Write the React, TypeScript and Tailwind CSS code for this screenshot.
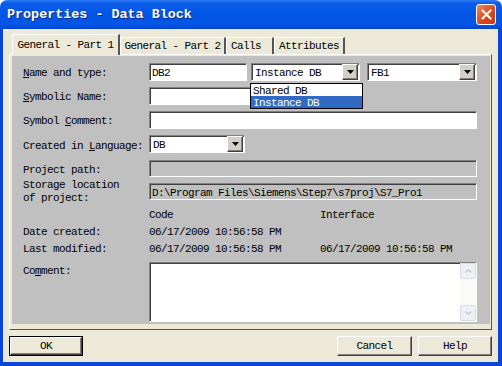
import React from 'react';

const sunken =
  'border border-t-[#808080] border-l-[#808080] border-b-white border-r-white shadow-[inset_1px_1px_0_#404040]';
const raised =
  'border border-t-white border-l-white border-r-[#404040] border-b-[#404040] shadow-[inset_-1px_-1px_0_#808080]';

const DownArrow: React.FC = () => (
  <svg width="7" height="4" viewBox="0 0 7 4">
    <path d="M0 0h7L3.5 4z" fill="#000" />
  </svg>
);

const Combo: React.FC<{ value: string; width: string; children?: React.ReactNode }> = ({
  value,
  width,
  children
}) => (
  <div className={`relative h-full ${width}`}>
    <div className={`h-full flex items-center bg-white ${sunken}`}>
      <span className="flex-1 pl-[3px] pt-[3px]">{value}</span>
      <div className={`w-[16px] h-[16px] mr-[1px] flex items-center justify-center bg-[#d4d0c8] ${raised}`}>
        <DownArrow />
      </div>
    </div>
    {children}
  </div>
);

const Label: React.FC<{ children: React.ReactNode; pt?: string }> = ({ children, pt }) => (
  <div className={`w-[126px] shrink-0 ${pt ?? 'pt-[3px]'}`}>{children}</div>
);

const Tab: React.FC<{ label: string; width: string; active?: boolean; extra?: string }> = ({
  label,
  width,
  active,
  extra
}) => (
  <div
    className={`flex items-center bg-[#ece9d8] border-l border-t border-l-white border-t-white border-r-2 border-r-[#555] ${width} ${
      active ? 'h-[21px] -mb-[1px] relative z-10' : 'h-[17px]'
    } ${extra ?? 'justify-center'}`}
  >
    {label}
  </div>
);

const Btn: React.FC<{ label: string; width: string; isDefault?: boolean }> = ({ label, width, isDefault }) => (
  <div className={`h-[20px] ${width} ${isDefault ? 'border border-black' : ''}`}>
    <div className={`h-full flex items-center justify-center pt-[1px] bg-[#ece9d8] ${raised}`}>{label}</div>
  </div>
);

export default function App() {
  return (
    <div className="w-[502px] h-[366px] flex flex-col bg-white text-black text-[11px] tracking-[-0.6px] font-['Liberation_Mono',monospace] leading-[13px]">
      {/* Title bar */}
      <div className="h-[29px] shrink-0 flex items-center justify-between pl-[7px] pr-[6px] rounded-t-[7px] bg-[linear-gradient(to_bottom,#2d7cf6_0%,#0a5ce8_12%,#0355e4_45%,#0356e6_85%,#0444cc_100%)]">
        <span className="text-white font-bold text-[13.4px] tracking-[0px] [text-shadow:1px_1px_#0b2a8a]">
          Properties - Data Block
        </span>
        <div className="w-[20px] h-[21px] rounded-[3px] border border-white flex items-center justify-center bg-[linear-gradient(135deg,#f08a62,#d6491f_55%,#c23c16)]">
          <svg width="11" height="11" viewBox="0 0 11 11">
            <path d="M1.5 1.5l8 8M9.5 1.5l-8 8" stroke="#fff" strokeWidth="2.2" strokeLinecap="round" />
          </svg>
        </div>
      </div>

      {/* Body */}
      <div className="flex-1 flex flex-col bg-[#ece9d8] border-l-[3px] border-r-[4px] border-b-[4px] border-[#0a46d8] px-[6px] pt-[5px]">
        {/* Tabs */}
        <div className="h-[20px] flex items-end pl-[3px]">
          <Tab label="General - Part 1" width="w-[108px]" active />
          <Tab label="General - Part 2" width="w-[106px]" />
          <Tab label="Calls" width="w-[48px]" extra="pl-[4px]" />
          <Tab label="Attributes" width="w-[71px]" />
        </div>

        {/* Panel */}
        <div className="h-[276px] border border-t-white border-l-white border-r-[#555] border-b-[#555] pl-[2px] pt-[1px] pr-[1px] pb-[5px]">
          <div className="h-full bg-[#c0c0c0] pl-[11px] pt-[7px] flex flex-col">
            {/* Name and type */}
            <div className="h-[18px] flex items-center">
              <Label>
                <u>N</u>ame and type:
              </Label>
              <div className={`h-full w-[98px] bg-white flex items-center pl-[2px] pt-[3px] ${sunken}`}>DB2</div>
              <div className="ml-[4px] h-full">
                <Combo value="Instance DB" width="w-[109px]">
                  <div className="absolute left-[-1px] top-[20px] w-[113px] z-20 bg-white border border-black">
                    <div className="h-[12px] pl-[2px] pt-[2px] flex items-center">Shared DB</div>
                    <div className="h-[12px] pl-[2px] pt-[2px] flex items-center bg-[#316ac5] text-white">
                      Instance DB
                    </div>
                  </div>
                </Combo>
              </div>
              <div className="ml-[7px] h-full">
                <Combo value="FB1" width="w-[110px]" />
              </div>
            </div>

            {/* Symbolic Name */}
            <div className="h-[18px] mt-[6px] flex items-center">
              <Label>
                <u>S</u>ymbolic Name:
              </Label>
              <div className={`h-full w-[150px] bg-white ${sunken}`} />
            </div>

            {/* Symbol Comment */}
            <div className="h-[18px] mt-[6px] flex items-center">
              <Label>
                Symbol <u>C</u>omment:
              </Label>
              <div className={`h-full w-[328px] bg-white ${sunken}`} />
            </div>

            {/* Created in Language */}
            <div className="h-[18px] mt-[6px] flex items-center">
              <Label pt="pt-[4px]">
                Created in <u>L</u>anguage:
              </Label>
              <Combo value="DB" width="w-[96px]" />
            </div>

            {/* Project path */}
            <div className="h-[17px] mt-[7px] flex items-center">
              <Label>Project path:</Label>
              <div className={`h-full w-[328px] ${sunken}`} />
            </div>

            {/* Storage location */}
            <div className="h-[26px] flex items-start">
              <Label pt="pt-[2px]">
                Storage location
                <br />
                of project:
              </Label>
              <div className={`h-[17px] mt-[6px] w-[328px] flex items-center pl-[2px] pt-[3px] ${sunken}`}>
                D:\Program Files\Siemens\Step7\s7proj\S7_Pro1
              </div>
            </div>

            {/* Code / Interface */}
            <div className="h-[13px] mt-[6px] flex items-center">
              <div className="w-[126px] shrink-0" />
              <div className="w-[171px]">Code</div>
              <div>Interface</div>
            </div>
            <div className="h-[13px] mt-[4px] flex items-center">
              <div className="w-[126px] shrink-0">Date created:</div>
              <div className="w-[171px]">06/17/2009 10:56:58 PM</div>
            </div>
            <div className="h-[13px] mt-[4px] flex items-center">
              <div className="w-[126px] shrink-0">Last modified:</div>
              <div className="w-[171px]">06/17/2009 10:56:58 PM</div>
              <div>06/17/2009 10:56:58 PM</div>
            </div>

            {/* Comment */}
            <div className="h-[60px] mt-[6px] flex items-start">
              <Label pt="pt-[3px]">
                Co<u>m</u>ment:
              </Label>
              <div className={`h-full w-[328px] bg-white flex justify-end ${sunken}`}>
                <div className="w-[16px] h-full flex flex-col justify-between bg-[#fafaf6]">
                  <div className="h-[16px] rounded-[2px] bg-[#eef0f5] border border-[#d8dce6] flex items-center justify-center">
                    <svg width="7" height="4" viewBox="0 0 7 4">
                      <path d="M0.5 3.5L3.5 0.8 6.5 3.5" stroke="#bcc2ce" strokeWidth="1.3" fill="none" />
                    </svg>
                  </div>
                  <div className="h-[16px] rounded-[2px] bg-[#eef0f5] border border-[#d8dce6] flex items-center justify-center">
                    <svg width="7" height="4" viewBox="0 0 7 4">
                      <path d="M0.5 0.5L3.5 3.2 6.5 0.5" stroke="#bcc2ce" strokeWidth="1.3" fill="none" />
                    </svg>
                  </div>
                </div>
              </div>
            </div>
          </div>
        </div>

        {/* Buttons */}
        <div className="mt-[6px] flex items-center">
          <Btn label="OK" width="w-[74px]" isDefault />
          <div className="flex-1" />
          <Btn label="Cancel" width="w-[75px]" />
          <div className="w-[6px]" />
          <Btn label="Help" width="w-[74px]" />
        </div>
      </div>
    </div>
  );
}
